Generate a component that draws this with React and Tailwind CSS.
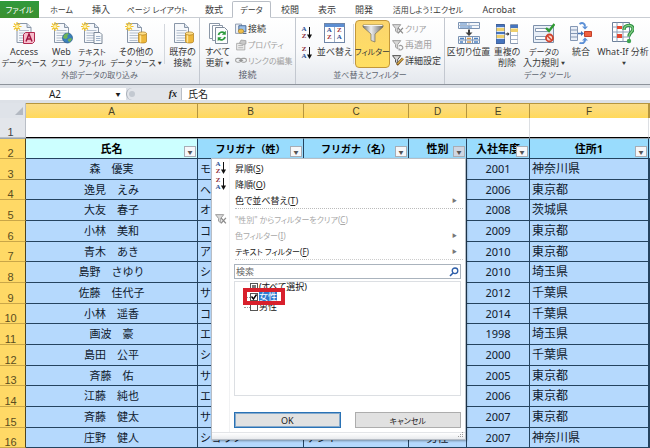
import { useState } from 'react';

const TABS = [
  { label: 'ホーム', width: 'w-[45px]' },
  { label: '挿入', width: 'w-[34px]' },
  { label: 'ページ レイアウト', width: 'w-[78px]' },
  { label: '数式', width: 'w-9' },
  { label: 'データ', width: 'w-[39px]', active: true },
  { label: '校閲', width: 'w-[38px]' },
  { label: '表示', width: 'w-9' },
  { label: '開発', width: 'w-[38px]' },
  { label: '活用しよう！エクセル', width: 'w-[90px]' },
  { label: 'Acrobat', width: 'w-[52px]' },
];

const ROWS = [
  ['森　優実', 'モリ', 'ユミ', '女性', '2001', '神奈川県'],
  ['逸見　えみ', 'ヘンミ', 'エミ', '女性', '2006', '東京都'],
  ['大友　春子', 'オオトモ', 'ハルコ', '女性', '2008', '茨城県'],
  ['小林　美和', 'コバヤシ', 'ミワ', '女性', '2009', '東京都'],
  ['青木　あき', 'アオキ', 'アキ', '女性', '2010', '東京都'],
  ['島野　さゆり', 'シマノ', 'サユリ', '女性', '2010', '埼玉県'],
  ['佐藤　佳代子', 'サトウ', 'カヨコ', '女性', '2012', '千葉県'],
  ['小林　遥香', 'コバヤシ', 'ハルカ', '女性', '2014', '千葉県'],
  ['画波　豪', 'エナミ', 'ゴウ', '男性', '1998', '埼玉県'],
  ['島田　公平', 'シマダ', 'コウヘイ', '男性', '2000', '千葉県'],
  ['斉藤　佑', 'サイトウ', 'ユウ', '男性', '2005', '東京都'],
  ['江藤　純也', 'エトウ', 'ジュンヤ', '男性', '2006', '東京都'],
  ['斉藤　健太', 'サイトウ', 'ケンタ', '男性', '2007', '東京都'],
  ['庄野　健人', 'ショウノ', 'ケント', '男性', '2007', '神奈川県'],
];

// katakana labels run long, so they are set one size smaller
const labelSize = (text) => (/[ァ-ヶ]/.test(text) ? 'text-[8px]' : 'text-[9px]');

/* ---------- icons ---------- */

function Svg({ size = 22, children }) {
  return (
    <svg width={size} height={size} viewBox="0 0 22 22" fill="none" aria-hidden="true" className="shrink-0">
      {children}
    </svg>
  );
}

function Sheet({ x = 4, spark = true }) {
  return (
    <>
      <path d={`M${x} 1.5h10l4 4v15h-14z`} fill="#f6f8fb" stroke="#8996a8" />
      <path d={`M${x + 10} 1.5v4h4`} fill="#dbe3ee" stroke="#8996a8" />
      <path d={`M${x + 2} 8.5h10M${x + 2} 11h10M${x + 2} 13.5h10M${x + 2} 16h10M${x + 2} 18.5h8`} stroke="#b4bfce" />
      {spark && (
        <>
          <path d="M4 0v9M0 4.5h8.5M1 1.5l6 6M7 1.5l-6 6" stroke="#f2c430" strokeWidth="1.2" />
          <circle cx="4" cy="4.5" r="1.6" fill="#fff3a8" />
        </>
      )}
    </>
  );
}

function Cylinder() {
  return (
    <>
      <path d="M13.5 11.5v8c0 2 8 2 8 0v-8z" fill="#eeb83c" stroke="#ad7b18" strokeWidth=".7" />
      <path d="M15.5 12v8.5" stroke="#ffe69a" strokeWidth="1.4" />
      <ellipse cx="17.5" cy="11.5" rx="4" ry="1.6" fill="#ffe08a" stroke="#ad7b18" strokeWidth=".7" />
    </>
  );
}

function AccessIcon() {
  return (
    <Svg>
      <Sheet />
      <path d="M10.5 12.5l2-2h9v9l-2 2h-9z" fill="#f7bccb" stroke="#b02a50" />
      <path d="M13 19.5l3-7.5 3 7.5M14 17h4" stroke="#a01440" strokeWidth="1.5" />
    </Svg>
  );
}

function WebIcon() {
  return (
    <Svg>
      <Sheet x={3.5} />
      <circle cx="16.5" cy="16" r="5" fill="#3a80bb" stroke="#275c8c" strokeWidth=".7" />
      <path d="M13 13c2-2 4-2 5-1l-2 2 1 1-2 2-3-1zM17 17l3-1 1 1-2 3-2-1z" fill="#71b556" />
    </Svg>
  );
}

function TextIcon() {
  return (
    <Svg>
      <Sheet x={3.5} />
      <path d="M13 10.5h6l2 2v9h-8z" fill="#f8fafc" stroke="#7b8797" />
      <path d="M15 14.5h4.500M15 16.500h4.500M15 18.500h4.500" stroke="#9eb2ca" />
    </Svg>
  );
}

function OtherSourceIcon() {
  return (
    <Svg>
      <Sheet x={2.5} />
      <Cylinder />
    </Svg>
  );
}

function ExistingIcon() {
  return (
    <Svg>
      <Sheet x={2.5} spark={false} />
      <Cylinder />
    </Svg>
  );
}

function RefreshIcon() {
  return (
    <Svg>
      <path d="M2.500 1.500h10v15h-10z" fill="#fff" stroke="#8c98a8" />
      <path d="M5.500 3.500h10v15h-10z" fill="#fff" stroke="#8c98a8" />
      <path d="M8.500 5.500h9l3 3v13h-12z" fill="#fbfcfd" stroke="#7f8b9b" />
      <path d="M11.500 13a3.500 3.500 0 0 1 6-1.800M18 15a3.500 3.500 0 0 1-6 1.800" stroke="#2c9a3c" strokeWidth="1.800" />
      <path d="M18.800 8.800v4h-4zM10.700 19.200v-4h4z" fill="#2c9a3c" />
    </Svg>
  );
}

function ConnectionIcon() {
  return (
    <Svg size={12}>
      <path d="M1 2h11v17H1z" fill="#eef2f8" stroke="#7a8ba3" strokeWidth="1.500" />
      <path d="M7 5h13v11H7z" fill="#9cc0e8" stroke="#4a6c96" strokeWidth="1.800" />
      <ellipse cx="11" cy="15" rx="5" ry="4" fill="#f0bf4b" stroke="#9a7320" />
      <path d="M14 19h7" stroke="#52667f" strokeWidth="2" />
    </Svg>
  );
}

function PropertiesIcon() {
  return (
    <Svg size={12}>
      <path d="M3 8h15v12H3z" fill="#ececec" stroke="#a3a3a3" strokeWidth="1.500" />
      <path d="M6 12h9M6 16h9" stroke="#a8a8a8" strokeWidth="1.500" />
      <path d="M8 8l3-6 9 1v6l-5 1z" fill="#c9c9c9" stroke="#a0a0a0" strokeWidth="1.500" />
    </Svg>
  );
}

function LinkIcon() {
  return (
    <Svg size={12}>
      <rect x="1" y="8" width="10" height="7" rx="3.500" stroke="#a0a0a0" strokeWidth="2" />
      <rect x="11" y="8" width="10" height="7" rx="3.500" stroke="#a0a0a0" strokeWidth="2" />
      <path d="M7 11.500h8" stroke="#8c8c8c" strokeWidth="2" />
    </Svg>
  );
}

// stacked letters with a down arrow; desc puts Z on top
function SortIcon({ desc = false }) {
  return (
    <span aria-hidden="true" className="flex items-center">
      <span className="flex flex-col text-center font-['Liberation_Serif',serif] text-[7px]/[7px] font-bold text-[#8a2a35]">
        <span className={desc ? '' : 'text-[#2c4f94]'}>{desc ? 'Z' : 'A'}</span>
        <span className={desc ? 'text-[#2c4f94]' : ''}>{desc ? 'A' : 'Z'}</span>
      </span>
      <svg width="5" height="12" viewBox="0 0 5 12" fill="none">
        <path d="M2.500 0v10" stroke="#111" />
        <path d="M0 7.500h5L2.500 12z" fill="#111" />
      </svg>
    </span>
  );
}

function SortDialogIcon() {
  return (
    <span aria-hidden="true" className="my-px flex h-5 w-[21px] flex-col border border-[#6f86a8] bg-white">
      <span className="h-[3px] bg-[#5c8ed2]" />
      <span className="grid flex-1 grid-cols-2 divide-x divide-[#9fb0c8] text-center font-['Liberation_Serif',serif] text-[7px]/[7px] font-bold">
        <span className="flex flex-col"><span className="text-[#2c4f94]">A</span><span className="text-[#a0303a]">Z</span></span>
        <span className="flex flex-col"><span className="text-[#a0303a]">Z</span><span className="text-[#2c4f94]">A</span></span>
      </span>
    </span>
  );
}

function FunnelIcon() {
  return (
    <Svg>
      <defs>
        <linearGradient id="funnel" x1="0" x2="1" y1="0" y2="0">
          <stop offset="0" stopColor="#757575" />
          <stop offset=".4" stopColor="#ededed" />
          <stop offset="1" stopColor="#6a6a6a" />
        </linearGradient>
      </defs>
      <path d="M1 3h20v2l-8 7v8l-4-1.500V12L1 5z" fill="url(#funnel)" stroke="#77705a" strokeWidth=".7" />
      <path d="M1.500 3.500h19" stroke="#f4f4f4" />
    </Svg>
  );
}

function SmallFunnel({ kind }) {
  const color = kind === 'advanced' ? '#4c4c4c' : '#9c9c9c';
  return (
    <Svg size={12}>
      <path d="M1 3h15l-5.500 7v8l-4-3v-5z" fill="#d9d9d9" stroke={color} strokeWidth="1.800" />
      {kind === 'clear' && <path d="M11 9l9 10M20 9l-9 10" stroke="#8b8b8b" strokeWidth="2.400" />}
      {kind === 'reapply' && <path d="M13 13a4 4 0 1 1 0 6M13 21v-4" stroke="#9a9a9a" strokeWidth="2" />}
      {kind === 'advanced' && (
        <>
          <path d="M9 20L20 8" stroke="#77511c" strokeWidth="4.500" />
          <path d="M10 18L20 8" stroke="#e9bd52" strokeWidth="2" />
        </>
      )}
    </Svg>
  );
}

function SplitColumnsIcon() {
  return (
    <Svg>
      <path d="M.5.5h21v6H.5z" fill="#f4f7fb" stroke="#7a92b2" />
      <path d="M.5 3.500h21M11 .5v6" stroke="#a7b8ce" />
      <path d="M2 2h7M2 5h12" stroke="#4d83c4" />
      <path d="M11 7.500v4" stroke="#3d3d3d" strokeWidth="2" />
      <path d="M7.500 10.500h7L11 14z" fill="#3d3d3d" />
      <path d="M.5 14.500h21v7H.5z" fill="#f4f7fb" stroke="#7a92b2" />
      <path d="M.5 18h21M7.500 14.500v7M14.500 14.500v7" stroke="#7a92b2" />
      <path d="M2 16.500h4M2 20h3M16 16.500h4M16 20h4" stroke="#4d83c4" strokeWidth="1.500" />
      <path d="M9 16.500h4M9 20h4" stroke="#d69a50" strokeWidth="1.500" />
    </Svg>
  );
}

function DuplicatesIcon() {
  return (
    <Svg>
      <path d="M0 2.500h8.500v19H0z" fill="#4674bd" stroke="#41619a" />
      <path d="M.5 6h8v3h-8zM.5 13h8v3h-8z" fill="#efd06c" />
      <path d="M.5 5.500h8M.5 9.500h8M.5 12.500h8M.5 16.500h8" stroke="#fff" strokeWidth=".8" />
      <path d="M9.500 12h3" stroke="#333" strokeWidth="1.200" />
      <path d="M11.500 10l2 2-2 2z" fill="#333" />
      <path d="M14.500 2.500H22v19h-7.500z" fill="#fff" stroke="#8899b2" />
      <path d="M14.500 3H22v3h-7.500z" fill="#4674bd" />
      <path d="M14.500 6.500H22v3.500h-7.500z" fill="#efd06c" />
      <path d="M14.500 13.500H22M14.500 17.500H22" stroke="#a6b3c6" />
    </Svg>
  );
}

function ValidationIcon() {
  return (
    <Svg>
      <path d="M.5 3.500h20v17H.5z" fill="#e9eff7" stroke="#7d90aa" />
      <path d="M2.500 6.500h13v3h-13zM2.500 14.500h12v3h-12z" fill="#fff" stroke="#8799b1" />
      <path d="M13 6l3 3 5.500-7" stroke="#2f9a32" strokeWidth="2.400" />
      <circle cx="16.500" cy="16" r="3.500" fill="#f7d9d0" stroke="#d2432c" strokeWidth="1.800" />
      <path d="M14 13.500l5 5" stroke="#d2432c" strokeWidth="1.500" />
    </Svg>
  );
}

function ConsolidateIcon() {
  return (
    <Svg>
      <path d="M.5 4.500h7v14h-7z" fill="#e8eef7" stroke="#8497b4" />
      <path d="M.5 8h7M.5 11.500h7M.5 15h7" stroke="#8497b4" />
      <path d="M8 11.500h4" stroke="#3f6fb5" strokeWidth="1.500" />
      <path d="M11 9l3 2.500-3 2.500z" fill="#3f6fb5" />
      <path d="M14.500 9.500h7v5h-7z" fill="#ef6140" stroke="#c3402a" />
      <path d="M9.500 2c3-2 5.500-.5 5.500 2.500M9.500 21c3 1 5.500-.5 5.500-3" stroke="#5b8fd6" strokeWidth="2" />
      <path d="M12 4.500h6l-3 3zM12 18.500h6l-3-3z" fill="#5b8fd6" />
    </Svg>
  );
}

function WhatIfIcon() {
  return (
    <Svg>
      <path d="M.5.5h17v19H.5z" fill="#fff" stroke="#6d809b" />
      <path d="M.5 5h17M.5 10h17M.5 15h17M5 .5v19M11 .5v19" stroke="#8fa0b8" />
      <path d="M5 4h5v3H5zM5 12h5v4H5z" fill="#e5472f" />
      <path d="M12 8c0-6 9-6 9-1 0 3.500-4 3-4 7.500" stroke="#2f9044" strokeWidth="3.400" />
      <path d="M12 8c0-6 9-6 9-1 0 3.500-4 3-4 7.500" stroke="#86cf86" strokeWidth="1.200" />
      <circle cx="17" cy="19" r="2.200" fill="#3fa552" />
    </Svg>
  );
}

/* ---------- ribbon ---------- */

function BigButton({ icon, lines, width, caret = false, active = false }) {
  return (
    <button
      type="button"
      className={`flex h-12 shrink-0 flex-col items-center rounded-sm border pt-px whitespace-nowrap ${width} ${
        active ? 'border-[#c2973a] bg-linear-to-b from-[#fbd56e] to-[#ffdf62]' : 'border-transparent'
      }`}
    >
      {icon}
      <span className="mt-0.5 text-center">
        {lines.map((line, i) => (
          <span key={line} className={`block h-[11px] ${labelSize(line)}`}>
            {line}
            {caret && i === lines.length - 1 && <span className="ml-0.5 align-[1px] text-[4px]">▼</span>}
          </span>
        ))}
      </span>
    </button>
  );
}

function SmallButton({ icon, label, disabled = false }) {
  return (
    <button
      type="button"
      disabled={disabled}
      className={`flex h-4 items-center gap-px whitespace-nowrap disabled:text-[#a0a0a0] ${labelSize(label)}`}
    >
      {icon}
      {label}
    </button>
  );
}

function Group({ label, width, children }) {
  return (
    <section aria-label={label} className={`flex flex-col border-r border-[#c3c8d0] ${width}`}>
      <div className="flex h-[50px] pt-0.5">{children}</div>
      <div className={`mt-px text-center text-[#5f6670] ${labelSize(label)}`}>{label}</div>
    </section>
  );
}

function Divider() {
  return <div className="mx-px my-1 w-px shrink-0 bg-[#d3d7dd]" />;
}

function Ribbon() {
  return (
    <div className="flex h-[67px] border-b border-[#8d939b] bg-linear-to-b from-white via-[#f8f9fb] to-[#e4e8ed]">
      <Group label="外部データの取り込み" width="w-[200px] shrink-0">
        <BigButton icon={<AccessIcon />} lines={['Access', 'データベース']} width="w-12" />
        <BigButton icon={<WebIcon />} lines={['Web', 'クエリ']} width="w-[27px]" />
        <BigButton icon={<TextIcon />} lines={['テキスト', 'ファイル']} width="w-[34px]" />
        <BigButton icon={<OtherSourceIcon />} lines={['その他の', 'データ ソース']} width="w-[54px]" caret />
        <Divider />
        <BigButton icon={<ExistingIcon />} lines={['既存の', '接続']} width="w-[33px]" />
      </Group>
      <Group label="接続" width="w-24 shrink-0">
        <BigButton icon={<RefreshIcon />} lines={['すべて', '更新']} width="w-[35px]" caret />
        <div className="flex flex-col pt-px">
          <SmallButton icon={<ConnectionIcon />} label="接続" />
          <SmallButton icon={<PropertiesIcon />} label="プロパティ" disabled />
          <SmallButton icon={<LinkIcon />} label="リンクの編集" disabled />
        </div>
      </Group>
      <Group label="並べ替えとフィルター" width="w-[149px] shrink-0">
        <div className="flex w-[21px] shrink-0 flex-col items-center gap-1.5 pt-1.5">
          <button type="button" aria-label="昇順"><SortIcon /></button>
          <button type="button" aria-label="降順"><SortIcon desc /></button>
        </div>
        <BigButton icon={<SortDialogIcon />} lines={['並べ替え']} width="w-[35px]" />
        <Divider />
        <BigButton icon={<FunnelIcon />} lines={['フィルター']} width="w-[35px]" active />
        <div className="flex flex-col pt-px pl-0.5">
          <SmallButton icon={<SmallFunnel kind="clear" />} label="クリア" disabled />
          <SmallButton icon={<SmallFunnel kind="reapply" />} label="再適用" disabled />
          <SmallButton icon={<SmallFunnel kind="advanced" />} label="詳細設定" />
        </div>
      </Group>
      <Group label="データ ツール" width="flex-1">
        <BigButton icon={<SplitColumnsIcon />} lines={['区切り位置']} width="w-[47px]" />
        <BigButton icon={<DuplicatesIcon />} lines={['重複の', '削除']} width="w-[30px]" />
        <BigButton icon={<ValidationIcon />} lines={['データの', '入力規則']} width="w-[44px]" caret />
        <BigButton icon={<ConsolidateIcon />} lines={['統合']} width="w-[30px]" />
        <BigButton icon={<WhatIfIcon />} lines={['What-If 分析', '']} width="w-[54px]" caret />
      </Group>
    </div>
  );
}

function FormulaBar() {
  return (
    <div className="flex h-[18px] items-center border-y-3 border-[#dde1e7] bg-[#dde1e7] text-[10px]/[12px] text-[#1c1c1c]">
      <input
        aria-label="名前ボックス"
        defaultValue="A2"
        className="h-3 w-[110px] bg-white text-center outline-none"
      />
      <button type="button" aria-label="名前の一覧" className="h-3 w-4 bg-white text-[5px]">▼</button>
      <div className="flex h-3 w-[55px] items-center justify-between rounded-l-full border-l border-[#a9afb8] bg-[#e2e5ea] pr-1 pl-0.5">
        <span className="size-1.5 rounded-full bg-[#c3c9d1]" />
        <span className="font-['Liberation_Serif',serif] text-[10px] font-bold italic">fx</span>
      </div>
      <input
        aria-label="数式バー"
        defaultValue="氏名"
        className="h-3 min-w-0 flex-1 border-l border-[#b9bec6] bg-white pl-1.5 outline-none"
      />
    </div>
  );
}

/* ---------- filter menu ---------- */

function MenuItem({ icon, label, accessKey, arrow = false, disabled = false }) {
  return (
    <button type="button" disabled={disabled} className="flex h-4 w-full items-center pr-2 disabled:text-[#a8a8a8]">
      <span className="flex w-[17px] shrink-0 justify-center">{icon}</span>
      <span className={`flex-1 pl-1.5 text-left [font-feature-settings:'palt'] ${labelSize(label)}`}>
        {label}(<u>{accessKey}</u>)
      </span>
      {arrow && <span className="text-[5px] text-[#777]">▶</span>}
    </button>
  );
}

function CheckRow({ label, checked, mixed = false, selected = false, onChange }) {
  return (
    <label className="flex h-2.5 items-center leading-[10px]">
      {!mixed && <span className="-ml-1.5 w-1.5 border-t border-dotted border-[#999]" />}
      <span className="relative mr-px flex">
        <input
          type="checkbox"
          checked={checked}
          onChange={onChange}
          className="size-2 appearance-none border border-[#555] bg-white"
        />
        {mixed && <span className="pointer-events-none absolute inset-0.5 bg-[#777]" />}
        {checked && !mixed && (
          <svg viewBox="0 0 8 8" fill="none" className="pointer-events-none absolute inset-0 size-2">
            <path d="M1.500 3.500l2 2.500 3-4.500" stroke="#000" strokeWidth="1.400" />
          </svg>
        )}
      </span>
      <span className={selected ? 'bg-[#2e7bd1] text-white' : ''}>{label}</span>
    </label>
  );
}

function FilterMenu() {
  const [female, setFemale] = useState(true);
  const [male, setMale] = useState(false);

  const toggleAll = () => {
    const next = !(female && male);
    setFemale(next);
    setMale(next);
  };

  return (
    <div className="absolute top-full right-0 z-10 w-[255px] border border-[#b8bec6] bg-white text-left text-[9px]/[11px] font-normal text-[#222] shadow-[1px_1px_2px_rgba(0,0,0,0.35)]">
      <div className="bg-linear-to-r from-white from-[17px] via-[#e2e4e7] via-[17px] to-white to-[18px] pt-px">
        <MenuItem icon={<SortIcon />} label="昇順" accessKey="S" />
        <MenuItem icon={<SortIcon desc />} label="降順" accessKey="O" />
        <MenuItem label="色で並べ替え" accessKey="T" arrow />
        <div className="mr-0.5 mb-0.5 ml-[23px] border-t border-dotted border-[#bbb]" />
        <MenuItem icon={<SmallFunnel kind="clear" />} label={'"性別" からフィルターをクリア'} accessKey="C" disabled />
        <MenuItem label="色フィルター" accessKey="I" arrow disabled />
        <MenuItem label="テキスト フィルター" accessKey="F" arrow />
        <div className="mr-0.5 mb-1 ml-[23px] border-t border-dotted border-[#ccc]" />

        <div className="pr-1 pb-1 pl-[22px]">
          <div className="flex h-[15px] items-center border border-[#aab3bd] bg-white px-px">
            <input
              aria-label="検索"
              placeholder="検索"
              className="min-w-0 flex-1 outline-none placeholder:text-[#666]"
            />
            <svg width="10" height="10" viewBox="0 0 10 10" fill="none" aria-hidden="true">
              <circle cx="6" cy="3.800" r="2.800" stroke="#2c5da8" strokeWidth="1.300" />
              <path d="M4 6L1 9" stroke="#2c5da8" strokeWidth="1.600" />
            </svg>
          </div>

          <div className="relative mt-0.5 h-[115px] border border-[#dcdfe3] bg-white pl-[15px] text-[#111] [font-feature-settings:'palt']">
            <CheckRow label="(すべて選択)" checked={female || male} mixed={female !== male} onChange={toggleAll} />
            <CheckRow label="女性" checked={female} selected onChange={() => setFemale(!female)} />
            <CheckRow label="男性" checked={male} onChange={() => setMale(!male)} />
            <span className="pointer-events-none absolute top-1.5 left-2 h-[17px] w-[42px] border-4 border-[#d8202c]" />
          </div>

          <div className="mt-4 grid grid-cols-2 gap-3.5">
            <button type="button" className="h-4 border border-[#2a72b5] bg-[#e1e1e1] ring-1 ring-[#2a72b5]/50 ring-inset">OK</button>
            <button type="button" className="h-4 border border-[#adadad] bg-[#e1e1e1] text-[8px] [font-feature-settings:'palt']">キャンセル</button>
          </div>
        </div>
      </div>
      <div className="flex h-[7px] items-end justify-end border-t border-[#e3e5e8] bg-linear-to-b from-white to-[#e9ebee] p-0.5">
        <svg width="5" height="5" viewBox="0 0 5 5" fill="#9a9a9a" aria-hidden="true">
          <path d="M4 0h1v1H4zM2 2h1v1H2zM4 2h1v1H4zM0 4h1v1H0zM2 4h1v1H2zM4 4h1v1H4z" />
        </svg>
      </div>
    </div>
  );
}

/* ---------- sheet ---------- */

function HeaderCell({ label, className = 'bg-[#99dcfd] text-[11px]', open = false, children }) {
  return (
    <th scope="col" className={`relative border-r border-b border-[#24435f] font-bold whitespace-nowrap text-black ${className}`}>
      {label}
      <button
        type="button"
        aria-label={`${label}のフィルター`}
        className={`absolute right-px bottom-px flex h-[11px] w-3 items-center justify-center border border-[#a8adb5] text-[5px] text-[#555] ${
          open ? 'bg-[#cfd6e2]' : 'bg-[#f6f7f9]'
        }`}
      >
        ▼
      </button>
      {children}
    </th>
  );
}

function Worksheet() {
  return (
    <table className="w-full table-fixed border-separate border-spacing-0 text-[11px]/[14px] text-[#10202e]">
      <colgroup>
        <col className="w-[26px]" />
        <col className="w-[172px]" />
        <col className="w-[106px]" />
        <col className="w-[105px]" />
        <col className="w-[58px]" />
        <col className="w-[63px]" />
        <col className="w-[119px]" />
        <col />
      </colgroup>
      <thead>
        <tr className="h-[15px] text-[10px]/[12px] text-[#4a4326]">
          <td className="border-r border-[#b9bec6] bg-[#dfe3e9] p-0">
            <svg width="8" height="8" viewBox="0 0 8 8" aria-hidden="true" className="mr-0.5 ml-auto">
              <path d="M8 0v8H0z" fill="#b3b9c2" />
            </svg>
          </td>
          {['A', 'B', 'C', 'D', 'E', 'F', ''].map((col) => (
            <th
              key={col}
              scope="col"
              className="border-t border-r border-[#b5953f] bg-linear-to-b from-[#fbdc86] to-[#ffd95a] p-0 pt-0.5 font-['Liberation_Sans',sans-serif] font-normal"
            >
              {col}
            </th>
          ))}
        </tr>
      </thead>
      <tbody>
        <tr className="h-5">
          <th scope="row" className="border-r border-b border-[#b9bec6] bg-[#e3e6eb] p-0 pr-1 align-bottom font-['Liberation_Sans',sans-serif] text-[11px]/[10px] font-normal text-[#444]">1</th>
          <td colSpan={4} className="border-b border-black bg-white p-0" />
          <td className="border-r border-b border-r-[#dcdfe3] border-b-black bg-white p-0" />
          <td className="border-r border-b border-r-[#dcdfe3] border-b-black bg-white p-0" />
          <td className="border-b border-black bg-white p-0" />
        </tr>
        <tr className="h-[21px] [&>*]:border-t [&>*]:border-t-[#9aa5ad] [&>*]:p-0">
          <th scope="row" className="border-r border-b border-r-[#4e4420] border-b-[#c9a648] bg-[#ffd966] align-bottom font-['Liberation_Sans',sans-serif] text-[11px]/[10px] font-normal text-[#5a4d20]">
            <span className="pr-1">2</span>
          </th>
          <HeaderCell label="氏名" className="bg-[#ccffff] text-[11px]" />
          <HeaderCell label="フリガナ（姓）" className="bg-[#99dcfd] text-[10px]" />
          <HeaderCell label="フリガナ（名）" className="bg-[#99dcfd] text-[10px]" />
          <HeaderCell label="性別" open>
            <FilterMenu />
          </HeaderCell>
          <HeaderCell label="入社年度" />
          <HeaderCell label="住所1" />
          <td className="border-b border-[#24435f] bg-[#99dcfd]" />
        </tr>
        {ROWS.map(([name, lastKana, firstKana, sex, year, address], i) => (
          <tr
            key={name}
            className="h-[21px] bg-[#b5d9fd] nth-[3n+1]:h-5 [&>td]:border-r [&>td]:border-b [&>td]:border-[#24435f] [&>td]:p-0 [&>td]:whitespace-nowrap"
          >
            <th scope="row" className="border-r border-b border-r-[#4e4420] border-b-[#c9a648] bg-[#ffd966] p-0 pr-1 align-bottom font-['Liberation_Sans',sans-serif] text-[11px]/[10px] font-normal text-[#5a4d20]">
              {i + 3}
            </th>
            <td className="text-center">{name}</td>
            <td><span className="pl-0.5">{lastKana}</span></td>
            <td><span className="pl-0.5">{firstKana}</span></td>
            <td className="text-center">{sex}</td>
            <td className="text-center">{year}</td>
            <td className="text-[12px]/[14px]"><span className="pl-0.5">{address}</span></td>
            <td />
          </tr>
        ))}
      </tbody>
    </table>
  );
}

export default function App() {
  return (
    <div className="bg-white font-['Noto_Sans','Noto_Sans_CJK_JP',sans-serif] text-[9px]/[11px] text-[#3a3a3a]">
      <div className="[font-feature-settings:'palt']">
        <nav className="flex h-[18px] items-stretch pt-px">
          <button type="button" className="w-[39px] bg-linear-to-b from-[#2f9a3c] to-[#3b8f2f] text-[8px] text-white">ファイル</button>
          {TABS.map(({ label, width, active }) => (
            <button
              key={label}
              type="button"
              className={`border-b whitespace-nowrap ${width} ${labelSize(label)} ${
                active ? 'rounded-t-xs border-x border-t border-x-[#b9bec6] border-t-[#b9bec6] border-b-white' : 'border-[#c9cdd3]'
              }`}
            >
              {label}
            </button>
          ))}
          <div className="flex-1 border-b border-[#c9cdd3]" />
        </nav>
        <Ribbon />
      </div>
      <FormulaBar />
      <Worksheet />
    </div>
  );
}
